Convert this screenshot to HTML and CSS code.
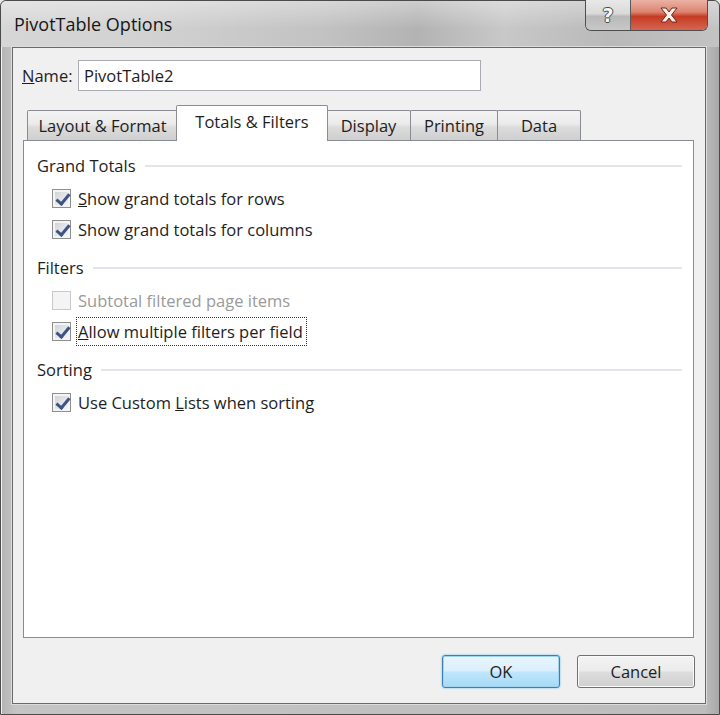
FILE: index.html
```html
<!DOCTYPE html>
<html>
<head>
<meta charset="utf-8">
<link rel="stylesheet" href="styles.css">
</head>
<body>
<div class="window">
  <div class="titlebar">
    <div class="title">PivotTable Options</div>
    <div class="caption-buttons">
      <div class="cap-btn help"><span class="help-glyph">?</span></div>
      <div class="cap-btn close">
        <svg width="24" height="16" viewBox="0 0 24 16"><path d="M4 1 L9 1 L12 5 L15 1 L20 1 L14.5 8 L20 15 L15 15 L12 11 L9 15 L4 15 L9.5 8 Z" fill="#fbefea" stroke="#6b2a20" stroke-width="1"/></svg>
      </div>
    </div>
  </div>
  <div class="client">
    <div class="name-row">
      <span class="name-label"><u>N</u>ame:</span>
      <div class="name-input">PivotTable2</div>
    </div>
    <div class="tabs">
      <div class="tab tab-layout">Layout &amp; Format</div>
      <div class="tab tab-totals selected">Totals &amp; Filters</div>
      <div class="tab tab-display">Display</div>
      <div class="tab tab-printing">Printing</div>
      <div class="tab tab-data">Data</div>
    </div>
    <div class="panel">
      <div class="group">
        <div class="group-head"><span>Grand Totals</span><div class="rule rule-a"></div></div>
        <div class="check-row"><span class="box checked"></span><span class="label"><u>S</u>how grand totals for rows</span></div>
        <div class="check-row"><span class="box checked"></span><span class="label">Show <u>g</u>rand totals for columns</span></div>
      </div>
      <div class="group">
        <div class="group-head"><span>Filters</span><div class="rule"></div></div>
        <div class="check-row disabled"><span class="box"></span><span class="label">Subtotal filtered page items</span></div>
        <div class="check-row"><span class="box checked"></span><span class="label focus"><u>A</u>llow multiple filters per field</span></div>
      </div>
      <div class="group">
        <div class="group-head"><span>Sorting</span><div class="rule"></div></div>
        <div class="check-row"><span class="box checked"></span><span class="label">Use Custom <u>L</u>ists when sorting</span></div>
      </div>
    </div>
    <div class="buttons">
      <div class="btn default">OK</div>
      <div class="btn">Cancel</div>
    </div>
  </div>
</div>
</body>
</html>
```

FILE: styles.css
```css
* { box-sizing: border-box; }
html, body { margin: 0; padding: 0; }
body {
  width: 720px;
  height: 715px;
  overflow: hidden;
  font-family: "Open Sans", "Noto Sans", sans-serif;
  color: #1e1e1e;
  background: #e9e9e9;
}
.window {
  width: 720px;
  height: 715px;
  display: flex;
  flex-direction: column;
  border: 1px solid #4b4b4b;
  border-radius: 6px 6px 0 0;
  background: linear-gradient(90deg, #b4b4b4 0%, #c4c4c4 2%, #bdbdbd 98%, #a8a8a8 100%);
  box-shadow: inset 1px 1px 0 #f2f2f2;
}
.titlebar {
  height: 46px;
  display: flex;
  align-items: flex-start;
  justify-content: space-between;
  background:
    linear-gradient(180deg, rgba(255,255,255,0.35) 0%, rgba(255,255,255,0) 60%),
    linear-gradient(90deg, #d6d6d6 0%, #d2d2d2 20%, #c2c2c2 45%, #b3b3b3 58%, #c8c8c8 70%, #b9b9b9 85%, #c3c3c3 100%);
  border-radius: 6px 6px 0 0;
}
.title {
  font-size: 18px;
  color: #161616;
  padding: 10px 0 0 13px;
  line-height: 26px;
}
.caption-buttons {
  display: flex;
  margin-right: 11px;
  margin-top: -1px;
  border: 1px solid #4e4e4e;
  border-top: none;
  border-radius: 0 0 6px 6px;
  overflow: hidden;
  height: 31px;
}
.cap-btn {
  height: 30px;
  display: flex;
  align-items: center;
  justify-content: center;
}
.help {
  width: 45px;
  background: linear-gradient(180deg, #e8e8e8 0%, #dadada 45%, #b9b9b9 55%, #c8c8c8 100%);
  border-right: 1px solid #5a5a5a;
}
.help-glyph {
  font-family: "DejaVu Sans", sans-serif;
  font-weight: bold;
  font-size: 19px;
  color: #f4f4f4;
  text-shadow: 1px 0 0 #4a4a4a, -1px 0 0 #4a4a4a, 0 1px 0 #4a4a4a, 0 -1px 0 #4a4a4a;
  line-height: 20px;
}
.close {
  width: 76px;
  background: linear-gradient(180deg, #eab2a6 0%, #dc8470 40%, #c63b23 55%, #d46650 100%);
}
.client {
  flex: 1;
  margin: 0 13px 10px 11px;
  border: 1px solid #6a6a6a;
  background: #f0f0f0;
  display: flex;
  flex-direction: column;
  padding: 12px 10px 15px 9px;
  box-shadow: 0 0 0 1px #dcdcdc;
}
.name-row {
  display: flex;
  align-items: center;
  height: 31px;
  font-size: 16.5px;
}
.name-label { width: 56px; }
.name-input {
  width: 403px;
  height: 31px;
  background: #fff;
  border: 1px solid #a9acb3;
  padding-left: 5px;
  line-height: 29px;
}
.tabs {
  display: flex;
  align-items: flex-end;
  height: 35px;
  margin-top: 14px;
  padding-left: 5px;
  font-size: 16.5px;
  position: relative;
  z-index: 1;
}
.tab {
  height: 30px;
  border: 1px solid #898c95;
  border-bottom: none;
  background: linear-gradient(180deg, #f3f3f3 0%, #ebebeb 45%, #dcdcdc 55%, #cfcfcf 100%);
  text-align: center;
  line-height: 30px;
  border-radius: 2px 2px 0 0;
}
.tab-layout { width: 151px; }
.tab-totals { width: 152px; margin-left: -2px; }
.tab-display { width: 85px; margin-left: -2px; }
.tab-printing { width: 88px; margin-left: -1px; }
.tab-data { width: 84px; margin-left: -1px; }
.tab.selected {
  height: 36px;
  margin-bottom: -1px;
  background: #fff;
  line-height: 32px;
  position: relative;
  z-index: 2;
}
.panel {
  flex: 1;
  margin: 0 1px 0 1px;
  background: #fff;
  border: 1px solid #898c95;
  padding: 9px 11px 0 13px;
  font-size: 16.5px;
}
.group { margin-bottom: 7px; }
.group-head {
  height: 30px;
  display: flex;
  align-items: center;
  margin-bottom: 3px;
}
.rule {
  flex: 1;
  height: 2px;
  background: #e2e5ea;
  margin-left: 9px;
  margin-top: 1px;
}
.check-row {
  height: 31px;
  display: flex;
  align-items: center;
  padding-left: 15px;
}
.box {
  width: 19px;
  height: 19px;
  border: 1px solid #8e8f8f;
  background: linear-gradient(135deg, #c9cdd3 0%, #e3e5e8 50%, #f7f7f7 100%);
  box-shadow: inset 0 0 0 2px #f4f4f4;
  margin-right: 7px;
  flex: none;
  position: relative;
}
.box.checked::after {
  content: "";
  position: absolute;
  left: 6px;
  top: 1px;
  width: 5px;
  height: 11px;
  border: solid #3d5384;
  border-width: 0 3px 3px 0;
  transform: rotate(40deg);
}
.disabled .box {
  border-color: #c9c9c9;
  background: #f4f4f4;
  box-shadow: none;
}
.disabled .label { color: #9a9a9a; }
.label { line-height: 27px; }
.label.focus {
  border: 1px dotted #303030;
  padding: 0 3px 0 1px;
  margin-left: -2px;
}
.buttons {
  display: flex;
  justify-content: flex-end;
  gap: 17px;
  margin-top: 17px;
  font-size: 16.5px;
}
.btn {
  width: 118px;
  height: 33px;
  border: 1px solid #707070;
  border-radius: 3px;
  background: linear-gradient(180deg, #f4f4f4 0%, #ebebeb 48%, #dddddd 52%, #cfcfcf 100%);
  box-shadow: inset 0 0 0 1px #fbfbfb;
  text-align: center;
  line-height: 31px;
}
.btn.default {
  border-color: #3c7fb1;
  background: linear-gradient(180deg, #eaf6fd 0%, #d9effc 48%, #bee6fd 52%, #a7d9f5 100%);
  box-shadow: inset 0 0 0 1px #9fd5f2, 0 0 2px #5fb3e5;
}
```
